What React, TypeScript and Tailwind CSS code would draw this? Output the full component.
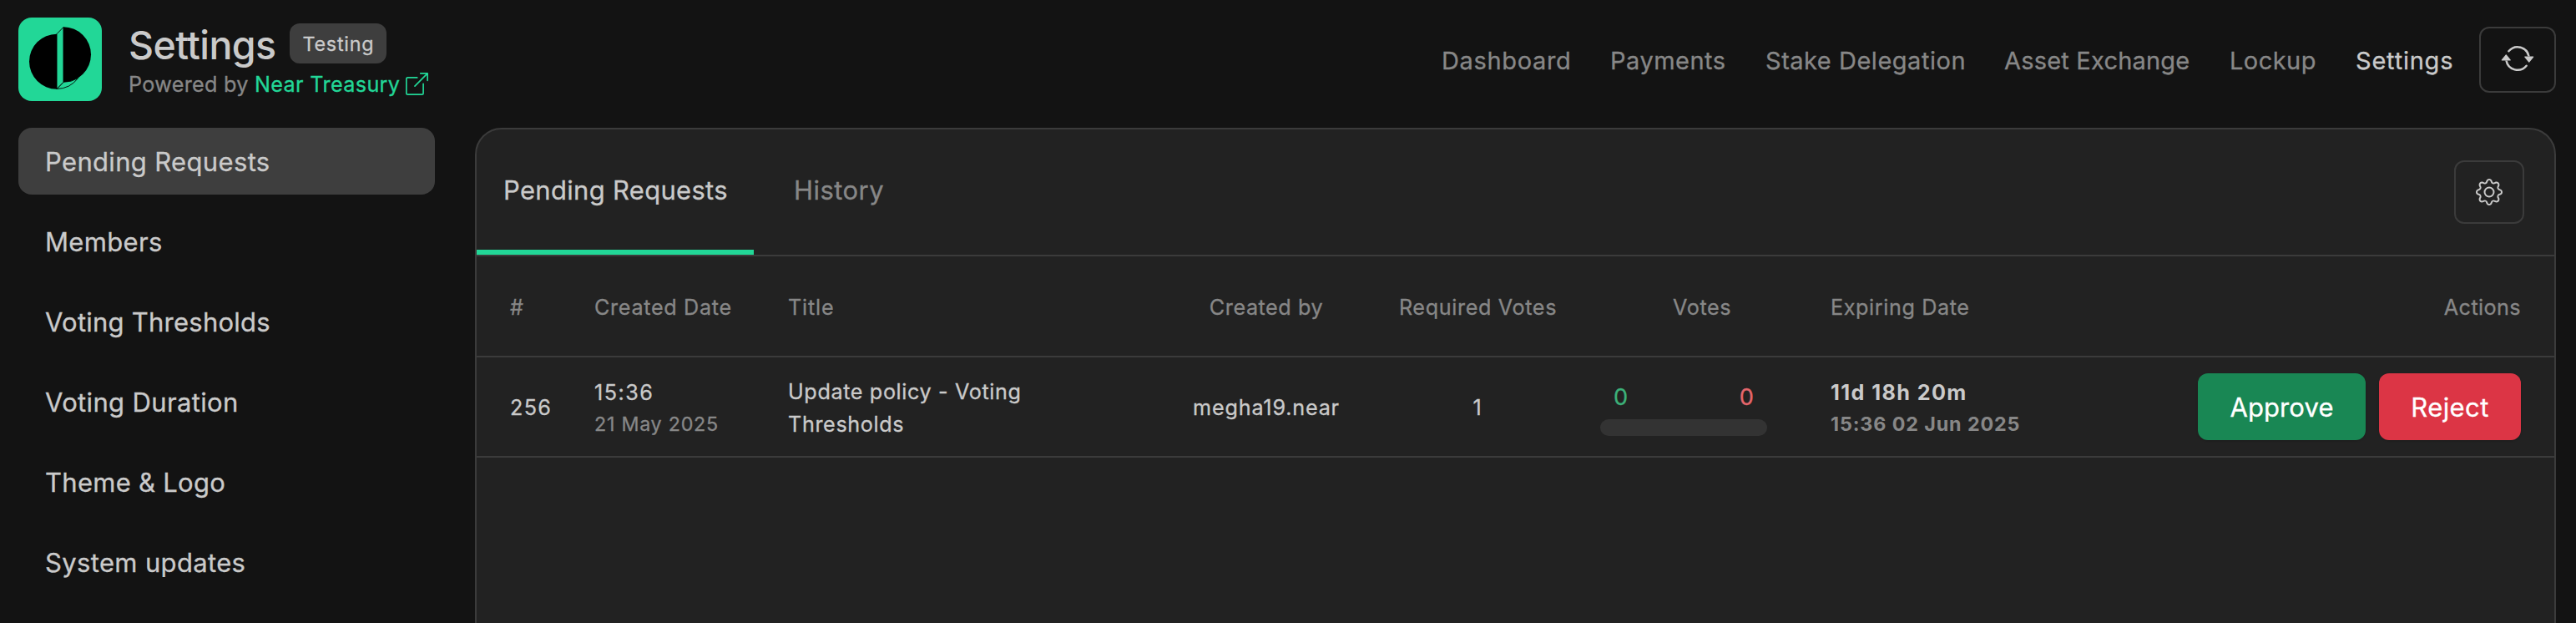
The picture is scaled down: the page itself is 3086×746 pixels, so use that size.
import React from "react";
import { BsArrowRepeat, BsBoxArrowUpRight, BsGear } from "react-icons/bs";

const navLinks = [
  { label: "Dashboard", className: "w-[202px] tracking-[0.65px]" },
  { label: "Payments", className: "w-[186px] tracking-[0.5px]" },
  { label: "Stake Delegation", className: "w-[286px] tracking-[0.52px]" },
  { label: "Asset Exchange", className: "w-[270px] tracking-[0.2px]" },
  { label: "Lockup", className: "w-[151px] tracking-[0.45px]" },
  { label: "Settings", className: "w-[148px] tracking-[0.78px] text-[#cacaca]" },
];

const sideItems = [
  { label: "Pending Requests", className: "bg-[#3e3e3e] tracking-[0.34px]" },
  { label: "Members", className: "tracking-[0.35px]" },
  { label: "Voting Thresholds", className: "tracking-[0.24px]" },
  { label: "Voting Duration", className: "tracking-[0.35px]" },
  { label: "Theme & Logo", className: "tracking-[0.28px]" },
  { label: "System updates", className: "tracking-[0.35px]" },
];

function Logo() {
  return (
    <svg viewBox="0 0 100 100" className="h-[100px] w-[100px] shrink-0">
      <rect width="100" height="100" rx="16" fill="#22d797" />
      <path d="M46 19.7 A33 33 0 0 0 46 85.7 Z" fill="#000" />
      <path d="M54 11.3 A33 33 0 0 1 54 77.3 Z" fill="#000" />
      <path
        d="M46 85.5 L54 77.3 A33 33 0 0 0 71.5 72.6 A33 33 0 0 1 46 85.5 Z"
        fill="#22d797"
        stroke="#000"
        strokeWidth="0.9"
        strokeLinejoin="round"
      />
      <path
        d="M46 19.7 L54 11.5 V77.3 L46 85.5 Z"
        fill="#22d797"
        stroke="#000"
        strokeWidth="0.9"
        strokeLinejoin="round"
      />
    </svg>
  );
}

function Header() {
  return (
    <header className="flex h-[153px] pl-[22px] pr-6">
      <div className="flex items-start pt-[21px]">
        <Logo />
        <div className="ml-8 flex flex-col pt-1">
          <div className="flex items-start">
            <h1 className="w-[193px] text-[46.5px] font-medium leading-[58px] tracking-[-0.6px] text-[#cacaca] [-webkit-text-stroke:0px]">
              Settings
            </h1>
            <span className="mt-[3px] flex h-12 w-[116px] items-center rounded-xl bg-[#3e3e3e] pl-[15.5px] pt-0.5 text-[23.3px] tracking-[0.78px] text-[#cacaca]">
              Testing
            </span>
          </div>
          <div className="flex items-center text-[25.2px] leading-9 text-[#878787]">
            <span className="w-[151px] tracking-[0.3px]">Powered by</span>
            <a className="flex items-center text-[#22d797]">
              <span className="w-[181px] tracking-[0.35px]">Near Treasury</span>
              <BsBoxArrowUpRight className="-mt-0.5 h-[27px] w-[27px]" />
            </a>
          </div>
        </div>
      </div>
      <nav className="ml-auto mt-8 flex h-20 items-center text-[29px] leading-10 text-[#878787]">
        {navLinks.map((link) => (
          <a key={link.label} className={`pt-px ${link.className}`}>
            {link.label}
          </a>
        ))}
        <button className="-mt-px flex h-[79px] w-[92px] items-center justify-center rounded-xl border-2 border-[#3b3b3b] text-[#cacaca]">
          <BsArrowRepeat className="-mt-[3px] h-10 w-10" />
        </button>
      </nav>
    </header>
  );
}

function Sidebar() {
  return (
    <aside className="flex w-[499px] shrink-0 flex-col gap-4 text-[31px] text-[#cacaca]">
      {sideItems.map((item) => (
        <a key={item.label} className={`flex h-20 items-center rounded-2xl pl-8 pt-0.5 ${item.className}`}>
          {item.label}
        </a>
      ))}
    </aside>
  );
}

const columns =
  "grid grid-cols-[101px_232px_456px_234px_273px_286px_428px_399px] items-center border-b-2 border-[#3b3b3b] pl-10 pt-1 text-[25.2px]";

function RequestsTable() {
  return (
    <div>
      <div className={`${columns} h-[121px] text-[#878787]`}>
        <div>#</div>
        <div className="tracking-[0.67px]">Created Date</div>
        <div className="tracking-[0.8px]">Title</div>
        <div className="text-center tracking-[0.55px]">Created by</div>
        <div className="text-center tracking-[0.63px]">Required Votes</div>
        <div className="pl-[97px] tracking-[0.6px]">Votes</div>
        <div className="tracking-[0.6px]">Expiring Date</div>
        <div className="text-right tracking-[0.4px]">Actions</div>
      </div>
      <div className={`${columns} h-[120px] text-[#cacaca]`}>
        <div className="tracking-[1.3px]">256</div>
        <div className="-mt-0.5">
          <div className="leading-[39px] tracking-[1.5px]">15:36</div>
          <div className="text-[23.3px] leading-9 tracking-[0.72px] text-[#878787]">21 May 2025</div>
        </div>
        <div className="w-[300px] leading-[39px] tracking-[0.62px]">Update policy - Voting Thresholds</div>
        <div className="text-center tracking-[0.8px]">megha19.near</div>
        <div className="pr-0.5 text-center">1</div>
        <div className="ml-[10px] w-[200px]">
          <div className="flex justify-between px-4 text-[27.2px] leading-10">
            <span className="text-[#3cb179]">0</span>
            <span className="text-[#e5666b]">0</span>
          </div>
          <div className="mt-1.5 h-5 rounded-[10px] bg-[#333333]" />
        </div>
        <div className="-mt-0.5 font-bold [-webkit-text-stroke:0px]">
          <div className="leading-[39px] tracking-[1.4px]">11d 18h 20m</div>
          <div className="text-[23.3px] leading-9 tracking-[0.88px] text-[#878787]">15:36 02 Jun 2025</div>
        </div>
        <div className="-mt-1 flex justify-end gap-4 text-[31px] text-white">
          <button className="h-20 w-[201px] rounded-xl bg-[#198754] pt-0.5 tracking-[0.12px] shadow-sm">Approve</button>
          <button className="h-20 w-[170px] rounded-xl bg-[#dc3545] pt-0.5 tracking-[0.4px] shadow-sm">Reject</button>
        </div>
      </div>
    </div>
  );
}

function Panel() {
  return (
    <main className="ml-12 h-[640px] w-[2493px] shrink-0 overflow-hidden rounded-[32px] border-2 border-[#3b3b3b] bg-[#222222]">
      <div className="flex h-[152px] border-b-2 border-[#3b3b3b] text-[31px] leading-[48px]">
        <div className="w-[332px] border-b-[6px] border-[#22d797] pl-8 pt-[49px] tracking-[0.3px] text-[#cacaca]">
          Pending Requests
        </div>
        <div className="pl-12 pt-[49px] tracking-[0.45px] text-[#878787]">History</div>
        <button className="ml-auto mr-9 mt-[37px] flex h-[76px] w-[84px] items-center justify-center rounded-xl border-2 border-[#3b3b3b] text-[#cacaca]">
          <BsGear className="h-8 w-8" />
        </button>
      </div>
      <RequestsTable />
    </main>
  );
}

export default function App() {
  return (
    <div className="h-[746px] w-[3086px] overflow-hidden bg-[#131313] font-['Inter',sans-serif] [-webkit-text-stroke:0.3px]">
      <Header />
      <div className="flex items-start pl-[22px]">
        <Sidebar />
        <Panel />
      </div>
    </div>
  );
}
